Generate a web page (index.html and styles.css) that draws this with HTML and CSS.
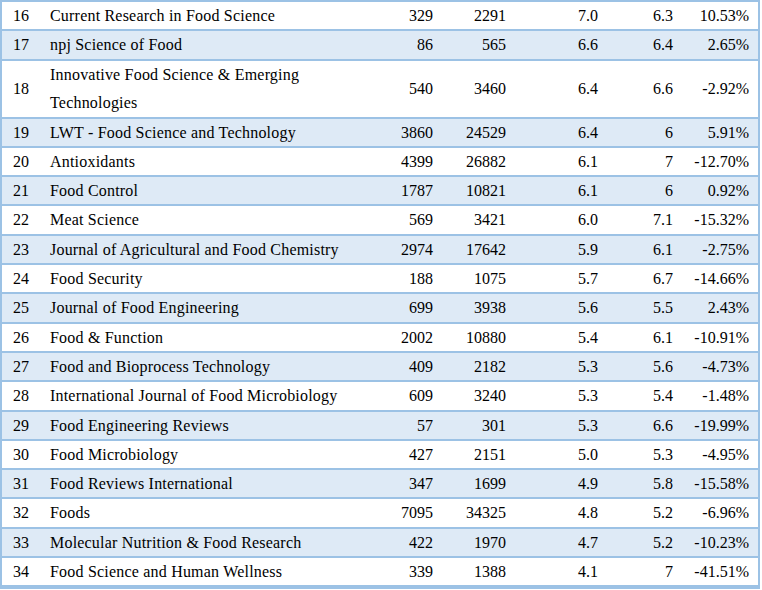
FILE: index.html
```html
<!DOCTYPE html>
<html lang="en">
<head>
<meta charset="utf-8">
<title>Food Science Journals</title>
<link rel="stylesheet" href="styles.css">
</head>
<body>
<table class="rank-table">
  <colgroup>
    <col class="c-rank"><col class="c-name"><col class="c-n1"><col class="c-n2"><col class="c-n3"><col class="c-n4"><col class="c-pct">
  </colgroup>
  <tbody>
    <tr><td class="rank">16</td><td class="name">Current Research in Food Science</td><td class="num n1">329</td><td class="num n2">2291</td><td class="num n3">7.0</td><td class="num n4">6.3</td><td class="num pct">10.53%</td></tr>
    <tr class="alt"><td class="rank">17</td><td class="name">npj Science of Food</td><td class="num n1">86</td><td class="num n2">565</td><td class="num n3">6.6</td><td class="num n4">6.4</td><td class="num pct">2.65%</td></tr>
    <tr><td class="rank">18</td><td class="name wrap">Innovative Food Science &amp; Emerging Technologies</td><td class="num n1">540</td><td class="num n2">3460</td><td class="num n3">6.4</td><td class="num n4">6.6</td><td class="num pct">-2.92%</td></tr>
    <tr class="alt"><td class="rank">19</td><td class="name">LWT - Food Science and Technology</td><td class="num n1">3860</td><td class="num n2">24529</td><td class="num n3">6.4</td><td class="num n4">6</td><td class="num pct">5.91%</td></tr>
    <tr><td class="rank">20</td><td class="name">Antioxidants</td><td class="num n1">4399</td><td class="num n2">26882</td><td class="num n3">6.1</td><td class="num n4">7</td><td class="num pct">-12.70%</td></tr>
    <tr class="alt"><td class="rank">21</td><td class="name">Food Control</td><td class="num n1">1787</td><td class="num n2">10821</td><td class="num n3">6.1</td><td class="num n4">6</td><td class="num pct">0.92%</td></tr>
    <tr><td class="rank">22</td><td class="name">Meat Science</td><td class="num n1">569</td><td class="num n2">3421</td><td class="num n3">6.0</td><td class="num n4">7.1</td><td class="num pct">-15.32%</td></tr>
    <tr class="alt"><td class="rank">23</td><td class="name">Journal of Agricultural and Food Chemistry</td><td class="num n1">2974</td><td class="num n2">17642</td><td class="num n3">5.9</td><td class="num n4">6.1</td><td class="num pct">-2.75%</td></tr>
    <tr><td class="rank">24</td><td class="name">Food Security</td><td class="num n1">188</td><td class="num n2">1075</td><td class="num n3">5.7</td><td class="num n4">6.7</td><td class="num pct">-14.66%</td></tr>
    <tr class="alt"><td class="rank">25</td><td class="name">Journal of Food Engineering</td><td class="num n1">699</td><td class="num n2">3938</td><td class="num n3">5.6</td><td class="num n4">5.5</td><td class="num pct">2.43%</td></tr>
    <tr><td class="rank">26</td><td class="name">Food &amp; Function</td><td class="num n1">2002</td><td class="num n2">10880</td><td class="num n3">5.4</td><td class="num n4">6.1</td><td class="num pct">-10.91%</td></tr>
    <tr class="alt"><td class="rank">27</td><td class="name">Food and Bioprocess Technology</td><td class="num n1">409</td><td class="num n2">2182</td><td class="num n3">5.3</td><td class="num n4">5.6</td><td class="num pct">-4.73%</td></tr>
    <tr><td class="rank">28</td><td class="name">International Journal of Food Microbiology</td><td class="num n1">609</td><td class="num n2">3240</td><td class="num n3">5.3</td><td class="num n4">5.4</td><td class="num pct">-1.48%</td></tr>
    <tr class="alt"><td class="rank">29</td><td class="name">Food Engineering Reviews</td><td class="num n1">57</td><td class="num n2">301</td><td class="num n3">5.3</td><td class="num n4">6.6</td><td class="num pct">-19.99%</td></tr>
    <tr><td class="rank">30</td><td class="name">Food Microbiology</td><td class="num n1">427</td><td class="num n2">2151</td><td class="num n3">5.0</td><td class="num n4">5.3</td><td class="num pct">-4.95%</td></tr>
    <tr class="alt"><td class="rank">31</td><td class="name">Food Reviews International</td><td class="num n1">347</td><td class="num n2">1699</td><td class="num n3">4.9</td><td class="num n4">5.8</td><td class="num pct">-15.58%</td></tr>
    <tr><td class="rank">32</td><td class="name">Foods</td><td class="num n1">7095</td><td class="num n2">34325</td><td class="num n3">4.8</td><td class="num n4">5.2</td><td class="num pct">-6.96%</td></tr>
    <tr class="alt"><td class="rank">33</td><td class="name">Molecular Nutrition &amp; Food Research</td><td class="num n1">422</td><td class="num n2">1970</td><td class="num n3">4.7</td><td class="num n4">5.2</td><td class="num pct">-10.23%</td></tr>
    <tr><td class="rank">34</td><td class="name">Food Science and Human Wellness</td><td class="num n1">339</td><td class="num n2">1388</td><td class="num n3">4.1</td><td class="num n4">7</td><td class="num pct">-41.51%</td></tr>
    <tr class="alt"><td class="rank"></td><td class="name"></td><td class="num n1"></td><td class="num n2"></td><td class="num n3"></td><td class="num n4"></td><td class="num pct"></td></tr>
  </tbody>
</table>
</body>
</html>
```
FILE: styles.css
```css
html, body {
  margin: 0;
  padding: 0;
  background: #ffffff;
}

.rank-table {
  width: 760px;
  table-layout: fixed;
  border-collapse: separate;
  border-spacing: 0;
  border-top: 2px solid #9cc2e5;
  border-left: 2px solid #9cc2e5;
  border-right: 2px solid #9cc2e5;
  font-family: "Liberation Serif", "Times New Roman", serif;
  font-size: 16px;
  color: #000000;
}

.c-rank { width: 42px; }
.c-name { width: 336px; }
.c-n1 { width: 56px; }
.c-n2 { width: 73px; }
.c-n3 { width: 92px; }
.c-n4 { width: 75px; }
.c-pct { width: 82px; }

.rank-table td {
  padding: 0;
  line-height: 27.3px;
  vertical-align: middle;
  border-bottom: 2px solid #9cc2e5;
  white-space: nowrap;
}

.rank-table tr.alt td {
  background: #deeaf6;
}

.rank-table td.rank {
  padding-left: 11px;
  text-align: left;
}

.rank-table td.name {
  padding-left: 6px;
  padding-right: 16px;
  text-align: left;
  letter-spacing: 0.2px;
}

.rank-table td.name.wrap {
  white-space: normal;
  line-height: 28px;
}

.rank-table td.num {
  text-align: right;
  padding-right: 3px;
}

.rank-table td.pct {
  padding-right: 9px;
}
```
